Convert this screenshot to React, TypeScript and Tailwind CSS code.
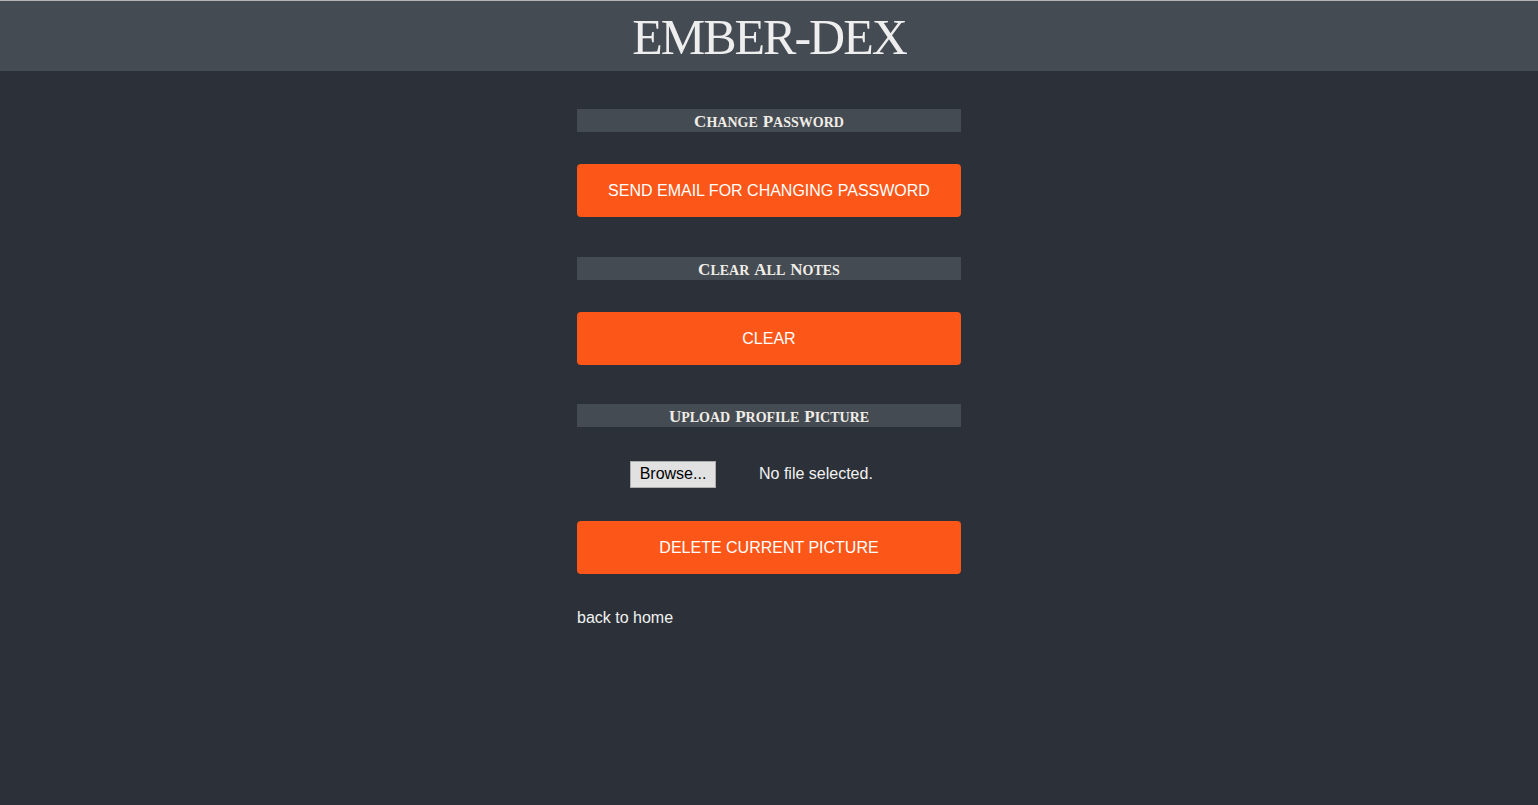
import { useState } from "react";

// Simula o estilo de versalete (letras iniciais maiores)
function SectionLabel({ title }: { title: string }) {
  const words = title.split(" ");
  return (
    <div className="h-[23px] w-full bg-[#454b53] flex items-center justify-center">
      <span
        className="font-bold text-[#f0ede6] leading-none flex items-baseline gap-[5px] pt-[1px]"
        style={{ fontFamily: '"Liberation Serif", serif' }}
      >
        {words.map((w, i) => (
          <span key={i}>
            <span className="text-[17px]">{w[0].toUpperCase()}</span>
            <span className="text-[14px]">{w.slice(1).toUpperCase()}</span>
          </span>
        ))}
      </span>
    </div>
  );
}

function OrangeButton({ label }: { label: string }) {
  return (
    <button className="h-[53px] w-full rounded-[4px] bg-[#fc5719] text-white text-[16px] uppercase pt-[1px]">
      {label}
    </button>
  );
}

export default function App() {
  const [fileName, setFileName] = useState("");

  return (
    <div
      className="min-h-[805px] bg-[#2c3139] text-[#f2f2f2]"
      style={{ fontFamily: '"Liberation Sans", Arial, sans-serif' }}
    >
      {/* Cabeçalho */}
      <header className="h-[71px] border-t border-[#b4b4b4] bg-[#454b53] flex items-center justify-center">
        <h1
          className="text-[50px] tracking-[-2px] text-[#eeeeee] leading-none pt-[2px]"
          style={{ fontFamily: '"Liberation Serif", serif' }}
        >
          EMBER-DEX
        </h1>
      </header>

      <main className="mx-auto w-[384px] pt-[38px] flex flex-col">
        <SectionLabel title="Change Password" />
        <div className="mt-[32px]">
          <OrangeButton label="Send email for changing password" />
        </div>

        <div className="mt-[40px]">
          <SectionLabel title="Clear All Notes" />
        </div>
        <div className="mt-[32px]">
          <OrangeButton label="Clear" />
        </div>

        <div className="mt-[39px]">
          <SectionLabel title="Upload Profile Picture" />
        </div>
        <div className="mt-[33px] h-[28px] flex items-center pl-[53px] text-[16px]">
          <label className="h-[27px] w-[86px] border border-[#adadad] bg-[#e1e1e1] text-black flex items-center justify-center cursor-pointer">
            Browse...
            <input
              type="file"
              className="hidden"
              onChange={(e) => setFileName(e.target.files?.[0]?.name ?? "")}
            />
          </label>
          <span className="ml-[43px]">{fileName || "No file selected."}</span>
        </div>

        <div className="mt-[33px]">
          <OrangeButton label="Delete current picture" />
        </div>

        <a href="#" className="mt-[32px] text-[16px] text-[#f2f2f2]">
          back to home
        </a>
      </main>
    </div>
  );
}
